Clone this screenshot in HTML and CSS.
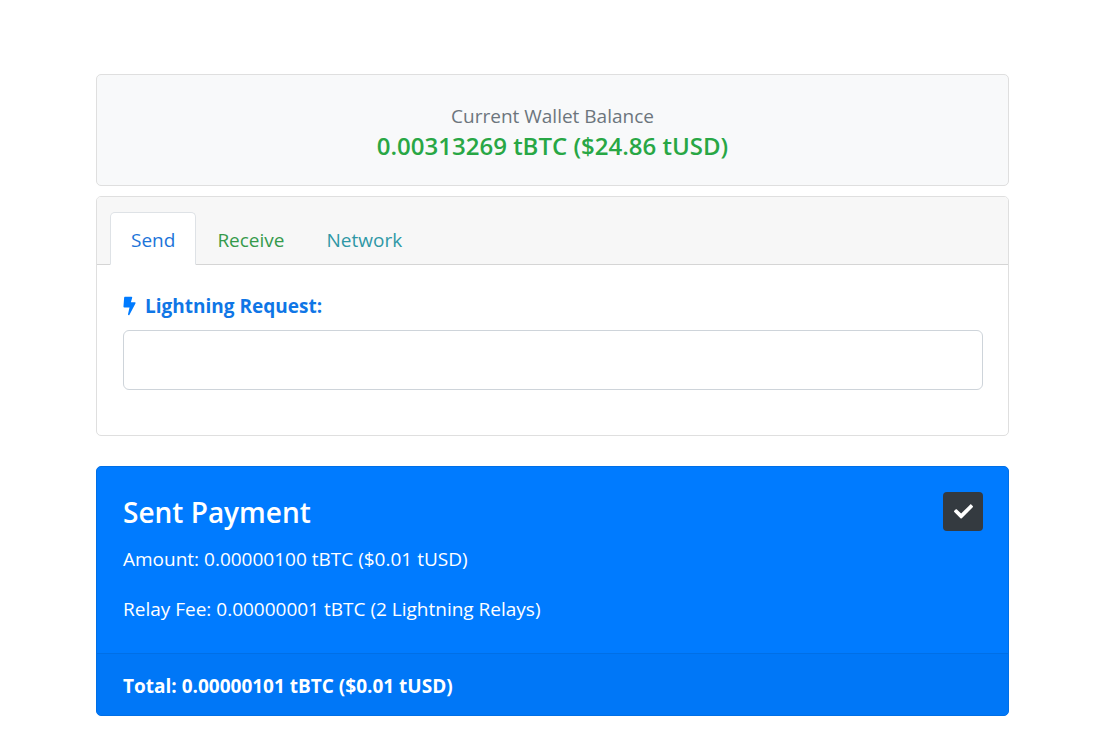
FILE: index.html
```html
<!DOCTYPE html>
<html lang="en">
<head>
    <meta charset="UTF-8">
    <meta name="viewport" content="width=device-width, initial-scale=1.0">
    <title>Wallet</title>
    <link rel="stylesheet" href="styles.css">
</head>
<body>
    <main class="container">
        <section class="card balance">
            <div class="balance-label">Current Wallet Balance</div>
            <div class="balance-amount">0.00313269 tBTC ($24.86 tUSD)</div>
        </section>

        <section class="card">
            <nav class="tabs">
                <a class="tab active" href="#send">Send</a>
                <a class="tab receive" href="#receive">Receive</a>
                <a class="tab network" href="#network">Network</a>
            </nav>
            <form class="send-form" id="send">
                <label class="request-label" for="request">
                    <svg class="bolt" viewBox="0 0 14 20" aria-hidden="true">
                        <path d="M2 0h7q1.200 0 .9 1L8.500 6H12.700q1.300 0 .7 1.200L7 19.300q-.4.700-1.100.5-.7-.2-.5-1L7 11.500H1.500Q.400 11.500.5 10.500L1.200 1q.1-1 .8-1z"/>
                    </svg>
                    Lightning Request:
                </label>
                <input class="request-input" type="text" id="request" name="request">
            </form>
        </section>

        <section class="card payment">
            <div class="payment-body">
                <div class="payment-header">
                    <h2>Sent Payment</h2>
                    <button class="dismiss" type="button" aria-label="Dismiss">
                        <svg class="check" viewBox="0 0 512 512" aria-hidden="true">
                            <path d="M174 439L7 272c-10-10-10-26 0-36l36-36c10-10 26-10 36 0l113 113L433 71c10-10 26-10 36 0l36 36c10 10 10 26 0 36L210 439c-10 10-26 10-36 0z"/>
                        </svg>
                    </button>
                </div>
                <p>Amount: 0.00000100 tBTC ($0.01 tUSD)</p>
                <p>Relay Fee: 0.00000001 tBTC (2 Lightning Relays)</p>
            </div>
            <div class="payment-footer">Total: 0.00000101 tBTC ($0.01 tUSD)</div>
        </section>
    </main>
</body>
</html>
```
FILE: styles.css
```css
* {
    box-sizing: border-box;
}
body {
    margin: 0;
    background-color: #fff;
    color: #212529;
    font-family: "Segoe UI", "Open Sans", "Noto Sans", sans-serif;
    font-size: 19px;
    line-height: 30px;
}
.container {
    padding: 74px 94px 25px 96px;
}
.card {
    border: 1px solid #dfdfdf;
    border-radius: 5px;
    background-color: #fff;
}
.balance {
    margin-bottom: 10px;
    padding: 26px 25px 24px;
    background-color: #f8f9fa;
    text-align: center;
}
.balance-label {
    color: #6c757d;
}
.balance-amount {
    color: #28a745;
    font-size: 24px;
    font-weight: 600;
}
.tabs {
    display: flex;
    padding: 15px 13px 0;
    border-bottom: 1px solid #d5d5d5;
    border-radius: 4px 4px 0 0;
    background-color: #f7f7f7;
}
.tab {
    margin-bottom: -1px;
    padding: 12px 20px 9px;
    border: 1px solid transparent;
    border-radius: 5px 5px 0 0;
    text-decoration: none;
}
.active {
    border-color: #dee2e6 #dee2e6 #fff;
    background-color: #fff;
    color: #1c74d9;
}
.receive {
    color: #359a4b;
}
.network {
    color: #2f97a6;
}
.send-form {
    padding: 26px 25px 45px 26px;
}
.request-label {
    display: flex;
    align-items: center;
    gap: 9px;
    margin-bottom: 9px;
    color: #0f76e6;
    font-weight: 700;
}
.bolt {
    width: 13px;
    height: 20px;
    fill: #007bff;
}
.request-input {
    display: block;
    width: 100%;
    height: 60px;
    padding: 10px 20px;
    border: 1px solid #ced4da;
    border-radius: 6px;
    font: inherit;
}
.payment {
    margin-top: 30px;
    border-color: #006fe6;
    background-color: #007bff;
    color: #fff;
}
.payment-body {
    padding: 25px 25px 29px 26px;
}
.payment-header {
    display: flex;
    align-items: flex-start;
    justify-content: space-between;
    margin-bottom: 12px;
}
h2 {
    margin: 0;
    font-size: 28px;
    font-weight: 600;
    line-height: 40px;
}
.dismiss {
    display: flex;
    align-items: center;
    justify-content: center;
    width: 40px;
    height: 39px;
    padding: 0;
    border: none;
    border-radius: 4px;
    background-color: #343a40;
    cursor: pointer;
}
.check {
    width: 19px;
    height: 19px;
    fill: #fff;
}
p {
    margin: 0 0 20px;
}
p:last-child {
    margin-bottom: 0;
}
.payment-footer {
    padding: 17px 26px 14px;
    border-top: 1px solid #006fe6;
    border-radius: 0 0 4px 4px;
    background-color: #0077f7;
    font-weight: 700;
}
```
